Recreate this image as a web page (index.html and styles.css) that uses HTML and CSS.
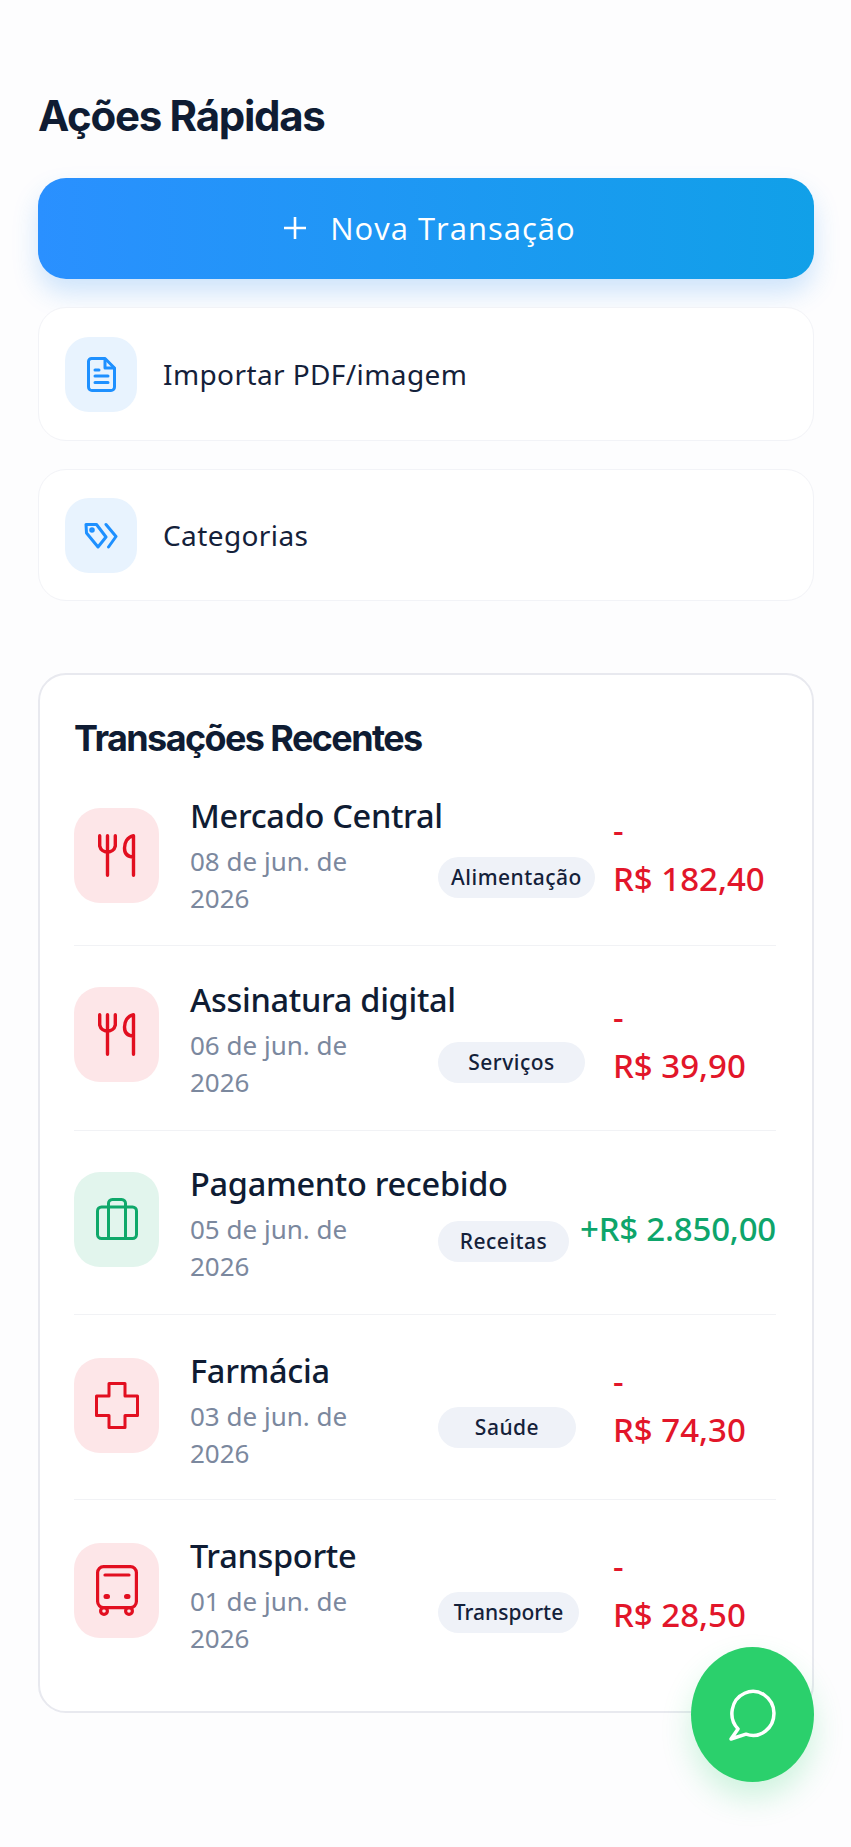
FILE: index.html
```html
<!DOCTYPE html>
<html lang="pt-BR">
<head>
<meta charset="UTF-8">
<title>Ações Rápidas</title>
<link rel="stylesheet" href="styles.css">
</head>
<body>
<div class="page">
  <h1 class="quick-title">Ações Rápidas</h1>
  <button class="new-btn">
    <svg class="plus" width="24" height="24" viewBox="0 0 24 24"><path d="M12 1V23M1 12H23"/></svg>
    Nova Transação
  </button>
  <div class="action">
    <span class="action-icon">
      <svg width="29" height="35" viewBox="0 0 29 35" fill="none" stroke="#1e90ff" stroke-width="3" stroke-linejoin="round" stroke-linecap="round"><path d="M4.500 1.500H18L27.500 11V30a3.500 3.500 0 0 1-3.500 3.500H5A3.500 3.500 0 0 1 1.500 30V4.500A3 3 0 0 1 4.500 1.500Z"/><path d="M18 2V11H27M8 13H12M8 19H21M8 25.500H21"/></svg>
    </span>
    <span class="action-label">Importar PDF/imagem</span>
  </div>
  <div class="action action-last">
    <span class="action-icon">
      <svg width="34" height="27" viewBox="0 0 34 27" fill="none" stroke="#1e90ff" stroke-width="3" stroke-linejoin="round" stroke-linecap="round"><path d="M2 2.500H12.500L22 15L14 25L2.500 11Z"/><path d="M22 2.500L32 14.500L24.500 25"/><circle cx="8" cy="8" r="1.300"/></svg>
    </span>
    <span class="action-label">Categorias</span>
  </div>

  <div class="recent">
    <h2 class="recent-title">Transações Recentes</h2>

    <div class="row row-first">
      <span class="tx-icon red">
        <svg width="38" height="43" viewBox="0 0 38 43" fill="none" stroke="#e20f20" stroke-width="3.400" stroke-linecap="round" stroke-linejoin="round"><path d="M1.700 1.700V12a8 8 0 0 0 15.600 0V1.700M9.500 1.700V41.300M35.500 41.300V1.700C29 3 26.500 9 26.500 14C26.500 20 30 23 35.500 23"/></svg>
      </span>
      <div class="tx-info">
        <div class="tx-name">Mercado Central</div>
        <div class="tx-date">08 de jun. de 2026</div>
      </div>
      <span class="pill pill-food">Alimentação</span>
      <div class="amount out">-<br>R$ 182,40</div>
    </div>

    <div class="row">
      <span class="tx-icon red">
        <svg width="38" height="43" viewBox="0 0 38 43" fill="none" stroke="#e20f20" stroke-width="3.400" stroke-linecap="round" stroke-linejoin="round"><path d="M1.700 1.700V12a8 8 0 0 0 15.600 0V1.700M9.500 1.700V41.300M35.500 41.300V1.700C29 3 26.500 9 26.500 14C26.500 20 30 23 35.500 23"/></svg>
      </span>
      <div class="tx-info">
        <div class="tx-name">Assinatura digital</div>
        <div class="tx-date">06 de jun. de 2026</div>
      </div>
      <span class="pill pill-serv">Serviços</span>
      <div class="amount out amount-low">-<br>R$ 39,90</div>
    </div>

    <div class="row">
      <span class="tx-icon green">
        <svg width="42" height="42" viewBox="0 0 42 42" fill="none" stroke="#0fa86a" stroke-width="3" stroke-linejoin="round"><rect x="1.500" y="9" width="39" height="31.500" rx="4"/><path d="M12.500 40.500V6a4 4 0 0 1 4-4.500H25.500a4 4 0 0 1 4 4.500V40.500"/></svg>
      </span>
      <div class="tx-info">
        <div class="tx-name">Pagamento recebido</div>
        <div class="tx-date">05 de jun. de 2026</div>
      </div>
      <span class="pill pill-inc">Receitas</span>
      <div class="amount in">+R$ 2.850,00</div>
    </div>

    <div class="row row-low">
      <span class="tx-icon red">
        <svg width="44" height="47" viewBox="0 0 44 47" fill="none" stroke="#e20f20" stroke-width="3" stroke-linejoin="round"><path d="M14 1.500H30V14H42.500V33.500H30V45.500H14V33.500H1.500V14H14Z"/></svg>
      </span>
      <div class="tx-info">
        <div class="tx-name">Farmácia</div>
        <div class="tx-date">03 de jun. de 2026</div>
      </div>
      <span class="pill pill-health">Saúde</span>
      <div class="amount out">-<br>R$ 74,30</div>
    </div>

    <div class="row row-low row-last">
      <span class="tx-icon red">
        <svg width="42" height="51" viewBox="0 0 42 51" fill="none" stroke="#e20f20" stroke-width="3.200" stroke-linecap="round" stroke-linejoin="round"><rect x="1.600" y="1.600" width="38.800" height="41" rx="6"/><path d="M9 10H33"/><circle cx="8" cy="46" r="3.400"/><circle cx="33" cy="46" r="3.400"/><path d="M10 31.500h1.500M30.500 31.500H32" stroke-width="5"/></svg>
      </span>
      <div class="tx-info">
        <div class="tx-name">Transporte</div>
        <div class="tx-date">01 de jun. de 2026</div>
      </div>
      <span class="pill pill-trans">Transporte</span>
      <div class="amount out">-<br>R$ 28,50</div>
    </div>
  </div>

  <div class="chat-fab">
    <svg width="50" height="52" viewBox="0 0 50 52" fill="none" stroke="#fff" stroke-width="3.500" stroke-linejoin="round"><path d="M3 50L10 39.900A21 22 0 1 1 18 45.200Z"/></svg>
  </div>
</div>
</body>
</html>
```

FILE: styles.css
```css
* {
  box-sizing: border-box;
}
body {
  margin: 0;
  background: #fdfdfe;
  font-family: "Noto Sans", sans-serif;
  color: #0f1c33;
}
.page {
  position: relative;
  height: 1847px;
  padding: 91px 37px 0 38px;
  overflow: hidden;
}
.quick-title {
  margin: 0 0 37px;
  font-family: Inter, sans-serif;
  font-size: 42px;
  line-height: 50px;
  font-weight: 700;
  letter-spacing: -1.300px;
}
.new-btn {
  display: flex;
  align-items: center;
  justify-content: center;
  gap: 23px;
  width: 100%;
  height: 101px;
  padding: 0 0 2px 7px;
  border: 0;
  border-radius: 28px;
  background: linear-gradient(90deg, #2a90ff, #11a0e8);
  box-shadow: 0 14px 26px rgba(40, 140, 240, 0.22);
  color: #fff;
  font-family: "Open Sans", sans-serif;
  font-size: 31px;
  letter-spacing: 1px;
}
.plus path {
  stroke: #fff;
  stroke-width: 2.600;
}
.action {
  display: flex;
  align-items: center;
  gap: 26px;
  height: 134px;
  margin-top: 28px;
  padding-left: 26px;
  border: 1px solid #f2f3f7;
  border-radius: 28px;
  background: #fff;
}
.action-last {
  height: 132px;
  margin-bottom: 72px;
}
.action-icon {
  display: flex;
  align-items: center;
  justify-content: center;
  width: 72px;
  height: 75px;
  border-radius: 24px;
  background: #e8f3fe;
}
.action-label {
  font-size: 28px;
  letter-spacing: 0.400px;
  color: #14213a;
}
.recent {
  height: 1040px;
  padding: 40px 36px 0 34px;
  border: 2px solid #e8e9ef;
  border-radius: 28px;
  background: #fff;
}
.recent-title {
  margin: 0 0 7px;
  font-family: Inter, sans-serif;
  font-size: 36px;
  line-height: 46px;
  font-weight: 700;
  letter-spacing: -1.600px;
}
.row {
  display: flex;
  align-items: center;
  height: 184.500px;
  border-bottom: 1px solid #f1f2f5;
}
.row-first {
  height: 178px;
  padding-bottom: 6px;
}
.row-low {
  padding-top: 4px;
}
.row-last {
  border-bottom: 0;
}
.tx-icon {
  display: flex;
  flex: none;
  align-items: center;
  justify-content: center;
  width: 85px;
  height: 95px;
  margin-bottom: 6px;
  border-radius: 26px;
}
.row-first .tx-icon {
  margin-top: 4px;
  margin-bottom: 0;
}
.tx-icon.red {
  background: #fde6e8;
}
.tx-icon.green {
  background: #e2f5ed;
}
.tx-info {
  flex: none;
  width: 248px;
  margin-left: 31px;
  padding-top: 3px;
}
.tx-name {
  font-size: 32.500px;
  line-height: 44px;
  font-weight: 500;
  letter-spacing: -0.300px;
  white-space: nowrap;
}
.tx-date {
  width: 170px;
  margin-top: 5px;
  font-size: 26px;
  line-height: 37px;
  color: #7b889e;
}
.pill {
  flex: none;
  height: 41px;
  margin-top: 38px;
  border-radius: 21px;
  background: #eff2f8;
  font-size: 21px;
  line-height: 41px;
  letter-spacing: 0.500px;
  text-align: center;
  color: #14213a;
  font-weight: 500;
}
.pill-food {
  width: 157px;
  margin-top: 47px;
}
.pill-serv {
  width: 147px;
  margin-top: 50px;
}
.pill-inc {
  width: 131px;
}
.pill-health {
  width: 138px;
}
.pill-trans {
  width: 141px;
  letter-spacing: 0;
}
.amount {
  flex: none;
  margin-left: auto;
  font-size: 33px;
  line-height: 49px;
  font-weight: 500;
}
.amount.out {
  width: 163px;
  color: #e2162a;
}
.row-low .amount {
  margin-bottom: 8px;
}
.amount-low {
  margin-top: 7px;
}
.amount.in {
  margin-top: 12px;
  letter-spacing: -0.200px;
  color: #0ea56b;
}
.chat-fab {
  position: absolute;
  right: 37px;
  bottom: 65px;
  display: flex;
  align-items: center;
  justify-content: center;
  width: 123px;
  height: 135px;
  border-radius: 50%;
  background: #2bd06c;
  box-shadow: 0 16px 30px rgba(43, 208, 108, 0.22);
}
```
